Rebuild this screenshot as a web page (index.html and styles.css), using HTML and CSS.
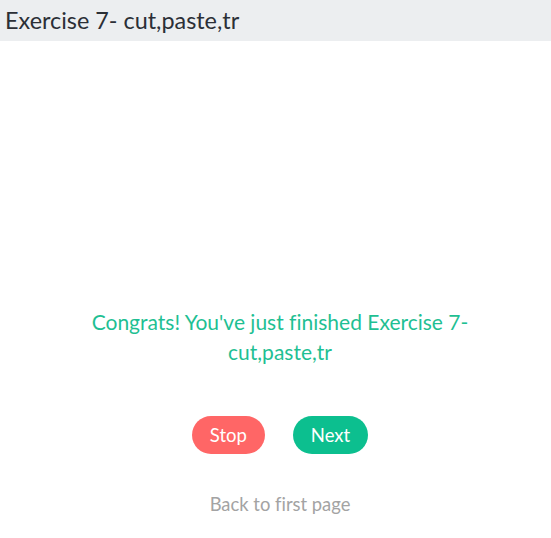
FILE: index.html
```html
<!DOCTYPE html>
<html>
<head>
<meta charset="utf-8">
<link rel="stylesheet" href="styles.css">
</head>
<body>
<header class="topbar">Exercise 7- cut,paste,tr</header>
<main class="content">
  <p class="congrats">Congrats! You've just finished Exercise 7- cut,paste,tr</p>
  <div class="actions">
    <button class="btn btn-stop">Stop</button>
    <button class="btn btn-next">Next</button>
  </div>
  <a class="back" href="#">Back to first page</a>
</main>
</body>
</html>
```
FILE: styles.css
```css
html, body {
  margin: 0;
  padding: 0;
  background: #fff;
  font-family: Lato, "Open Sans", sans-serif;
  font-variant-ligatures: none;
}
.topbar {
  background: #eceef0;
  height: 41px;
  line-height: 40px;
  padding-left: 5px;
  font-size: 23.4px;
  color: #2b2f36;
}
.content {
  display: flex;
  flex-direction: column;
  align-items: center;
  padding-top: 266px;
  padding-left: 9px;
}
.congrats {
  margin: 0;
  width: 420px;
  text-align: center;
  font-size: 21px;
  line-height: 30px;
  color: #1fbf93;
}
.actions {
  display: flex;
  gap: 28px;
  margin-top: 49px;
}
.btn {
  border: none;
  border-radius: 19px;
  height: 38px;
  padding: 0 18px;
  font-family: Lato, sans-serif;
  font-variant-ligatures: none;
  font-size: 18.5px;
  color: #fff;
}
.btn-stop { background: #ff6666; }
.btn-next { background: #0cbf8f; }
.back {
  margin-top: 39px;
  font-size: 18.4px;
  line-height: 22px;
  color: #a3a3a3;
  text-decoration: none;
}
```
